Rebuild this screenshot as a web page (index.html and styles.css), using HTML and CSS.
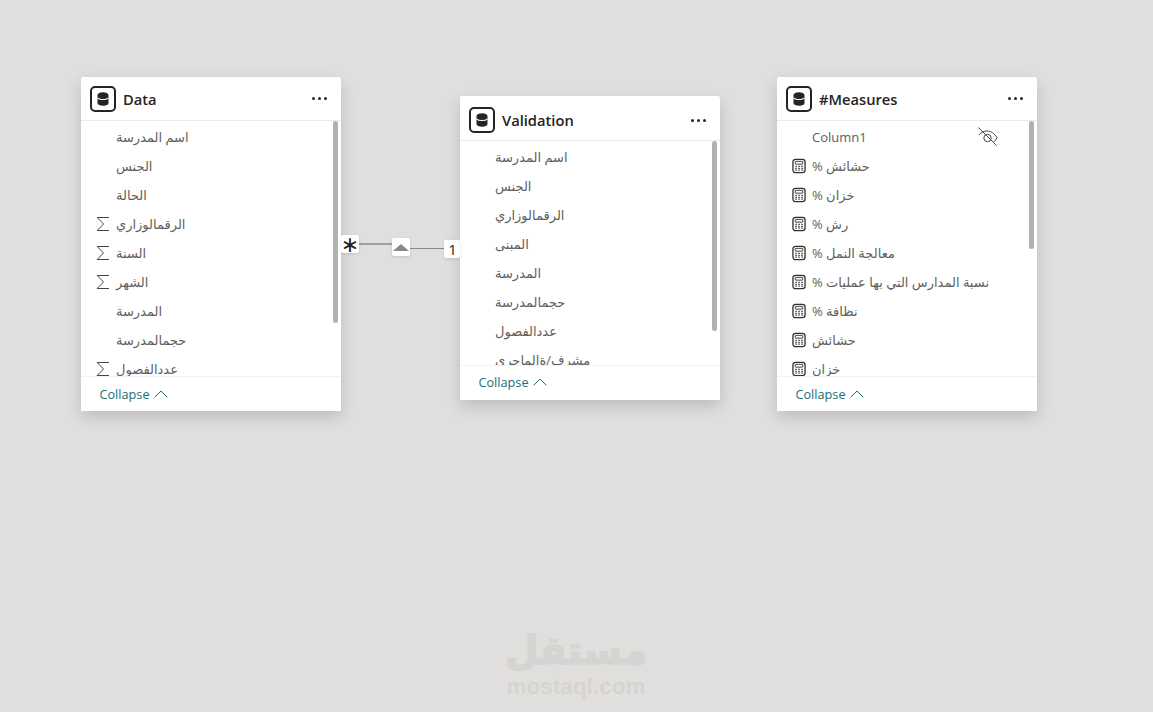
FILE: index.html
```html
<!DOCTYPE html>
<html lang="en">
<head>
    <meta charset="UTF-8">
    <title>Model view</title>
    <link rel="stylesheet" href="styles.css">
</head>
<body>
    <svg width="0" height="0" class="defs">
        <symbol id="db" viewBox="0 0 26 26">
            <rect x="1" y="1" width="24" height="24" rx="4" fill="#fff" stroke="#252423" stroke-width="2"/>
            <path d="M7.500 9c0-1.700 2.500-2.800 5.500-2.800s5.500 1.100 5.500 2.800v8c0 1.700-2.500 2.800-5.500 2.800s-5.500-1.100-5.500-2.800z" fill="#252423"/>
            <path d="M7.500 11.800c1.200 1.200 3.200 1.700 5.500 1.700s4.300-.5 5.500-1.700" fill="none" stroke="#fff" stroke-width="1.200"/>
        </symbol>
        <symbol id="sigma" viewBox="0 0 14 16">
            <path d="M13 1.500H1.200L7.500 8 1.200 14.500H13" fill="none" stroke="#484644" stroke-width="1"/>
        </symbol>
        <symbol id="calc" viewBox="0 0 15 16">
            <rect x="1" y=".8" width="13" height="14.400" rx="2.800" fill="none" stroke="#323130" stroke-width="1.400"/>
            <rect x="3.500" y="3" width="8" height="3" rx=".5" fill="none" stroke="#323130"/>
            <path d="M3.600 8.500h1.500M6.800 8.500h1.500M10 8.500h1.500M3.600 10.500h1.500M6.800 10.500h1.500M10 10.500h1.500M3.600 12.500h1.500M6.800 12.500h1.500M10 12.500h1.500" stroke="#323130" stroke-width="1.300"/>
        </symbol>
        <symbol id="chevron" viewBox="0 0 14 8">
            <path d="M.7 7.300 7 1l6.300 6.300" fill="none" stroke="#1b6f78" stroke-width="1"/>
        </symbol>
    </svg>

    <div class="table-card card-data">
        <div class="card-head">
            <svg class="db-icon"><use href="#db"/></svg>
            <span class="card-title">Data</span>
            <span class="more"><i></i><i></i><i></i></span>
        </div>
        <div class="card-list">
            <div class="thumb thumb-data"></div>
            <div class="row"><span class="row-icon"></span><bdi>اسم المدرسة</bdi></div>
            <div class="row"><span class="row-icon"></span><bdi>الجنس</bdi></div>
            <div class="row"><span class="row-icon"></span><bdi>الحالة</bdi></div>
            <div class="row"><svg class="row-icon"><use href="#sigma"/></svg><bdi>الرقمالوزاري</bdi></div>
            <div class="row"><svg class="row-icon"><use href="#sigma"/></svg><bdi>السنة</bdi></div>
            <div class="row"><svg class="row-icon"><use href="#sigma"/></svg><bdi>الشهر</bdi></div>
            <div class="row"><span class="row-icon"></span><bdi>المدرسة</bdi></div>
            <div class="row"><span class="row-icon"></span><bdi>حجمالمدرسة</bdi></div>
            <div class="row"><svg class="row-icon"><use href="#sigma"/></svg><bdi>عددالفصول</bdi></div>
        </div>
        <div class="card-foot">Collapse <svg class="chevron"><use href="#chevron"/></svg></div>
    </div>

    <div class="table-card card-validation">
        <div class="card-head">
            <svg class="db-icon"><use href="#db"/></svg>
            <span class="card-title">Validation</span>
            <span class="more"><i></i><i></i><i></i></span>
        </div>
        <div class="card-list">
            <div class="thumb thumb-validation"></div>
            <div class="row"><span class="row-icon"></span><bdi>اسم المدرسة</bdi></div>
            <div class="row"><span class="row-icon"></span><bdi>الجنس</bdi></div>
            <div class="row"><span class="row-icon"></span><bdi>الرقمالوزاري</bdi></div>
            <div class="row"><span class="row-icon"></span><bdi>المبنى</bdi></div>
            <div class="row"><span class="row-icon"></span><bdi>المدرسة</bdi></div>
            <div class="row"><span class="row-icon"></span><bdi>حجمالمدرسة</bdi></div>
            <div class="row"><span class="row-icon"></span><bdi>عددالفصول</bdi></div>
            <div class="row"><span class="row-icon"></span><bdi>مشرف/ةالماجري</bdi></div>
        </div>
        <div class="card-foot">Collapse <svg class="chevron"><use href="#chevron"/></svg></div>
    </div>

    <div class="table-card card-measures">
        <div class="card-head">
            <svg class="db-icon"><use href="#db"/></svg>
            <span class="card-title">#Measures</span>
            <span class="more"><i></i><i></i><i></i></span>
        </div>
        <div class="card-list">
            <div class="thumb thumb-measures"></div>
            <div class="row">
                <span class="row-icon"></span><bdi>Column1</bdi>
                <svg class="eye-off" viewBox="0 0 20 20">
                    <path d="M.5.5l18 18" fill="none" stroke="#484644"/>
                    <path d="M.8 8C3.500 5.200 6 4 9 4c3.500 0 7 2 10 6.500-.8 2.200-2 3.500-3.500 4.500" fill="none" stroke="#484644"/>
                    <circle cx="9.500" cy="11" r="3.700" fill="none" stroke="#484644"/>
                </svg>
            </div>
            <div class="row"><svg class="row-icon"><use href="#calc"/></svg><bdi>حشائش %</bdi></div>
            <div class="row"><svg class="row-icon"><use href="#calc"/></svg><bdi>خزان %</bdi></div>
            <div class="row"><svg class="row-icon"><use href="#calc"/></svg><bdi>رش %</bdi></div>
            <div class="row"><svg class="row-icon"><use href="#calc"/></svg><bdi>معالجة النمل %</bdi></div>
            <div class="row"><svg class="row-icon"><use href="#calc"/></svg><bdi>نسبة المدارس التي بها عمليات %</bdi></div>
            <div class="row"><svg class="row-icon"><use href="#calc"/></svg><bdi>نظافة %</bdi></div>
            <div class="row"><svg class="row-icon"><use href="#calc"/></svg><bdi>حشائش</bdi></div>
            <div class="row"><svg class="row-icon"><use href="#calc"/></svg><bdi>خزان</bdi></div>
        </div>
        <div class="card-foot">Collapse <svg class="chevron"><use href="#chevron"/></svg></div>
    </div>

    <!-- relationship line between Data and Validation -->
    <div class="link link-left"></div>
    <div class="link link-right"></div>
    <div class="tag tag-many">∗</div>
    <div class="tag tag-dir"><span class="tri"></span></div>
    <div class="tag tag-one">1</div>

    <div class="watermark">
        <div class="wm-ar">مستقل</div>
        <div class="wm-en">mostaql.com</div>
    </div>
</body>
</html>
```

FILE: styles.css
```css
body {
    margin: 0;
    width: 1153px;
    height: 712px;
    position: relative;
    overflow: hidden;
    background-color: #e1dfdd;
    font-family: 'Open Sans', 'DejaVu Sans', sans-serif;
    color: #484644;
}

.defs {
    position: absolute;
}

.table-card {
    position: absolute;
    width: 260px;
    display: flex;
    flex-direction: column;
    background-color: #fff;
    border-radius: 2px;
    box-shadow: 0 6px 16px rgba(0,0,0,0.16);
}

.card-data {
    left: 81px;
    top: 77px;
    height: 334px;
}

.card-validation {
    left: 460px;
    top: 96px;
    height: 304px;
}

.card-measures {
    left: 777px;
    top: 77px;
    height: 334px;
}

.card-head {
    height: 43px;
    flex: none;
    display: flex;
    align-items: center;
    padding: 0 14px 0 9px;
    border-bottom: 1px solid #edebe9;
}

.card-validation .card-head {
    height: 40px;
    padding-top: 4px;
}

.db-icon {
    width: 26px;
    height: 26px;
    margin-right: 7px;
}

.card-title {
    flex: 1;
    font-size: 14.7px;
    font-weight: 600;
    color: #252423;
}

.more {
    display: flex;
    gap: 3px;
}

.more i {
    width: 3px;
    height: 3px;
    border-radius: 50%;
    background-color: #252423;
}

.card-list {
    flex: 1;
    position: relative;
    overflow: hidden;
    padding-top: 1px;
}

.thumb {
    position: absolute;
    top: 0;
    right: 3px;
    width: 5px;
    border-radius: 3px;
    background-color: #b3b0ad;
}

.thumb-data {
    height: 202px;
}

.thumb-validation {
    height: 190px;
}

.thumb-measures {
    height: 128px;
}

.row {
    height: 29px;
    display: flex;
    align-items: center;
    padding-left: 15px;
    font-size: 13px;
    white-space: nowrap;
    color: #605e5c;
}

.row-icon {
    width: 14px;
    height: 16px;
    flex: none;
    margin-right: 6px;
}

.eye-off {
    width: 20px;
    height: 20px;
    margin-left: 111px;
}

.card-foot {
    height: 35px;
    flex: none;
    box-sizing: border-box;
    display: flex;
    align-items: center;
    gap: 4px;
    padding-left: 18.500px;
    border-top: 1px solid #f3f2f1;
    background-color: #fff;
    font-size: 12.7px;
    color: #1b6f78;
}

.card-validation .card-foot {
    padding-bottom: 2px;
}

.chevron {
    width: 14px;
    height: 8px;
}

.link {
    position: absolute;
    background-color: #8a8886;
}

.link-left {
    left: 359px;
    top: 243px;
    width: 33px;
    height: 2px;
    background-color: #a19f9d;
}

.link-right {
    left: 410px;
    top: 248px;
    width: 34px;
    height: 1px;
}

.tag {
    position: absolute;
    height: 18px;
    display: flex;
    align-items: center;
    justify-content: center;
    background-color: #fff;
    border-radius: 2px;
    color: #252423;
    box-shadow: 0 1px 3px rgba(0,0,0,0.12);
}

.tag-many {
    left: 341px;
    top: 235px;
    width: 18px;
    font-family: 'DejaVu Sans', sans-serif;
    font-size: 22px;
}

.tag-dir {
    left: 392px;
    top: 238px;
    width: 18px;
}

.tri {
    width: 0;
    height: 0;
    border-left: 8px solid transparent;
    border-right: 8px solid transparent;
    border-bottom: 7px solid #8a8886;
}

.tag-one {
    left: 444px;
    top: 240px;
    width: 16px;
    padding-left: 1px;
    box-sizing: border-box;
    font-size: 15px;
}

.watermark {
    position: absolute;
    left: 490px;
    top: 627px;
    width: 172px;
    text-align: center;
    color: #d6d4d2;
    font-weight: 700;
}

.wm-ar {
    font-family: 'DejaVu Sans', sans-serif;
    font-size: 39px;
    line-height: 48px;
    -webkit-text-stroke: 1.5px #d6d4d2;
}

.wm-en {
    font-family: 'Liberation Sans', sans-serif;
    font-size: 22.500px;
    line-height: 24px;
}
```
